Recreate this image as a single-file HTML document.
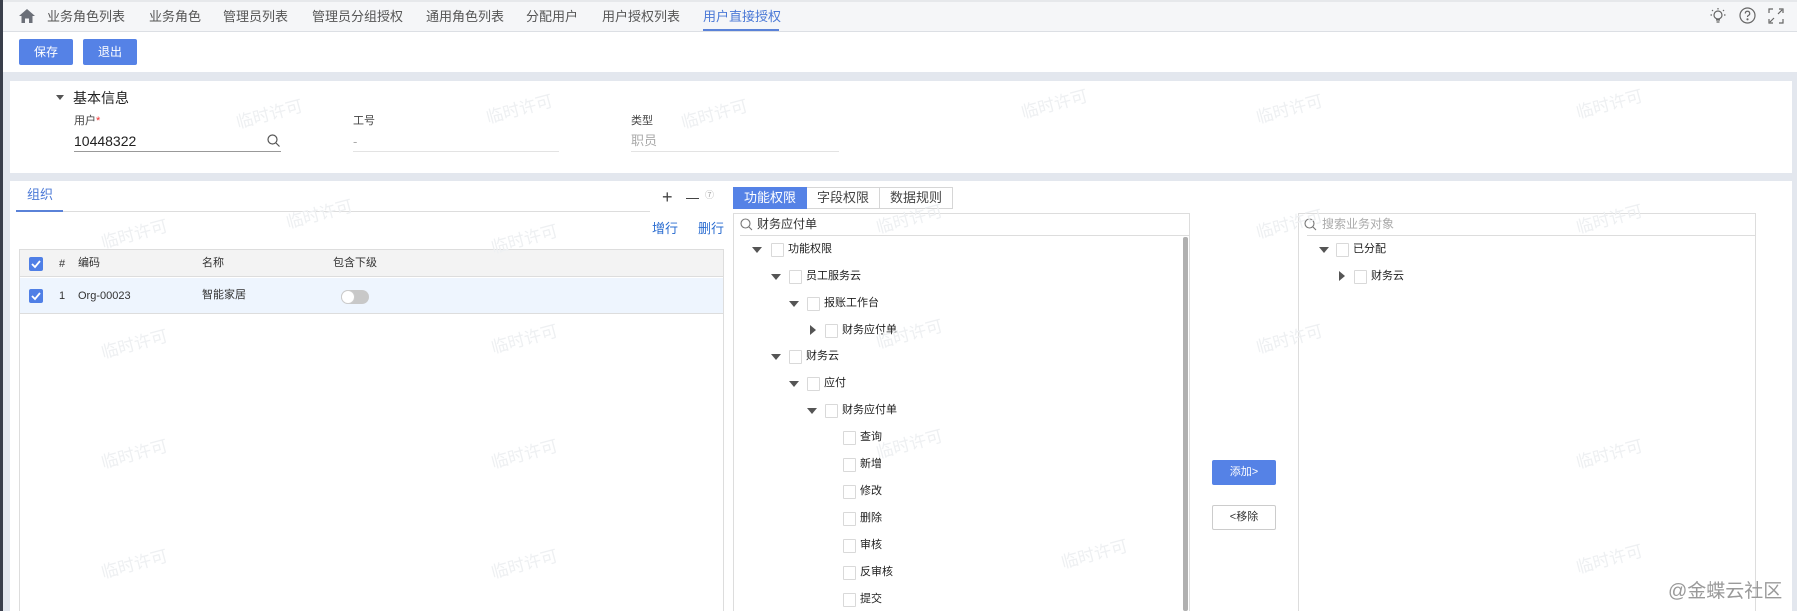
<!DOCTYPE html>
<html><head><meta charset="utf-8">
<style>
*{margin:0;padding:0;box-sizing:border-box}
body{width:1797px;height:611px;overflow:hidden;background:#e3e7ee;font-family:"Liberation Sans","Noto Sans CJK SC",sans-serif;color:#212121;position:relative}
.a{position:absolute}
.t{position:absolute;white-space:nowrap;line-height:1}
.cb{position:absolute;width:13px;height:14px;border:1px solid #d9d9d9;background:#fff;border-radius:1px}
.dn{position:absolute;width:0;height:0;border-left:5px solid transparent;border-right:5px solid transparent;border-top:6px solid #555}
.rt{position:absolute;width:0;height:0;border-top:5px solid transparent;border-bottom:5px solid transparent;border-left:6px solid #555}
.wm{position:absolute;color:#eef0f2;font-size:17px;transform:rotate(-15deg);white-space:nowrap}
.nv{position:absolute;white-space:nowrap;line-height:1;top:10px;font-size:13px;color:#555}
</style></head><body>
<div class="a" style="left:0;top:0;width:3px;height:611px;background:#3a3f4b"></div>
<div class="a" style="left:3px;top:0;width:1794px;height:32px;background:#f5f6f8;border-bottom:1px solid #dcdfe4;border-top:2px solid #e6e8eb"></div>
<svg class="a" style="left:19px;top:9px" width="16" height="14" viewBox="0 0 16 14"><path d="M8 0 L16 7 L13.5 7 L13.5 14 L10 14 L10 9.5 L6 9.5 L6 14 L2.5 14 L2.5 7 L0 7 Z" fill="#6b6f78"/></svg>
<div class="nv" style="left:47px">业务角色列表</div>
<div class="nv" style="left:149px">业务角色</div>
<div class="nv" style="left:223px">管理员列表</div>
<div class="nv" style="left:312px">管理员分组授权</div>
<div class="nv" style="left:426px">通用角色列表</div>
<div class="nv" style="left:526px">分配用户</div>
<div class="nv" style="left:602px">用户授权列表</div>
<div class="nv" style="left:703px;color:#4a78d6">用户直接授权</div>
<div class="a" style="left:703px;top:29px;width:76px;height:2px;background:#5a82d8"></div>
<svg class="a" style="left:1709px;top:7px" width="18" height="18" viewBox="0 0 18 18" fill="none" stroke="#666" stroke-width="1.2"><circle cx="9" cy="8" r="4"/><path d="M7 13h4M7.5 15h3M9 1v1.5M3 3l1 1M15 3l-1 1M1.5 8h1.5M15 8h1.5"/></svg>
<svg class="a" style="left:1739px;top:7px" width="17" height="17" viewBox="0 0 17 17" fill="none" stroke="#666" stroke-width="1.2"><circle cx="8.5" cy="8.5" r="7.5"/><path d="M6.3 6.5a2.2 2.2 0 1 1 3 2c-.6.3-.8.7-.8 1.5"/><circle cx="8.5" cy="12.3" r=".5" fill="#666"/></svg>
<svg class="a" style="left:1768px;top:8px" width="16" height="16" viewBox="0 0 16 16" fill="none" stroke="#666" stroke-width="1.2"><path d="M1 5V1h4M11 1h4v4M15 11v4h-4M5 15H1v-4M10 6l4-4M6 10l-4 4"/></svg>
<div class="a" style="left:3px;top:32px;width:1794px;height:40px;background:#fff"></div>
<div class="a" style="left:19px;top:39px;width:54px;height:26px;background:#5582e6;border-radius:2px;color:#fff;font-size:12px;text-align:center;line-height:26px">保存</div>
<div class="a" style="left:83px;top:39px;width:54px;height:26px;background:#5582e6;border-radius:2px;color:#fff;font-size:12px;text-align:center;line-height:26px">退出</div>
<div class="a" style="left:10px;top:81px;width:1782px;height:92px;background:#fff"></div>
<div class="dn" style="left:56px;top:95px;border-left-width:4px;border-right-width:4px;border-top-width:5px"></div>
<div class="t" style="left:73px;top:91px;font-size:14px">基本信息</div>
<div class="t" style="left:74px;top:116px;font-size:11px;color:#444">用户<span style="color:#e33">*</span></div>
<div class="t" style="left:74px;top:134px;font-size:14px">10448322</div>
<div class="a" style="left:74px;top:151px;width:207px;height:1px;background:#999"></div>
<svg class="a" style="left:267px;top:134px" width="13" height="13" viewBox="0 0 13 13" fill="none" stroke="#555" stroke-width="1.2"><circle cx="5.5" cy="5.5" r="4.5"/><path d="M9 9l3.5 3.5"/></svg>
<div class="t" style="left:353px;top:116px;font-size:11px;color:#444">工号</div>
<div class="t" style="left:353px;top:135px;font-size:13px;color:#aaa">-</div>
<div class="a" style="left:353px;top:151px;width:206px;height:1px;background:#e3e3e3"></div>
<div class="t" style="left:631px;top:116px;font-size:11px;color:#444">类型</div>
<div class="t" style="left:631px;top:134px;font-size:13px;color:#aaa">职员</div>
<div class="a" style="left:631px;top:151px;width:208px;height:1px;background:#e3e3e3"></div>
<div class="a" style="left:10px;top:181px;width:1782px;height:430px;background:#fff"></div>
<div class="t" style="left:27px;top:188px;font-size:13px;color:#4a78d6">组织</div>
<div class="a" style="left:16px;top:211px;width:634px;height:1px;background:#ddd"></div>
<div class="a" style="left:16px;top:210px;width:47px;height:2px;background:#5a82d8"></div>
<div class="t" style="left:662px;top:188px;font-size:18px;color:#444">+</div>
<div class="a" style="left:686px;top:198px;width:13px;height:1px;background:#444"></div>
<div class="t" style="left:705px;top:191px;font-size:9px;color:#aaa">⑦</div>
<div class="t" style="left:652px;top:222px;font-size:13px;color:#2a6cd0">增行</div>
<div class="t" style="left:698px;top:222px;font-size:13px;color:#2a6cd0">删行</div>
<div class="a" style="left:19px;top:249px;width:705px;height:362px;border:1px solid #ddd;border-bottom:none"></div>
<div class="a" style="left:20px;top:250px;width:703px;height:27px;background:#f3f3f3;border-bottom:1px solid #ddd"></div>
<div class="a" style="left:20px;top:278px;width:703px;height:36px;background:#eef5fe;border-bottom:1px solid #ddd"></div>
<div class="a" style="left:29px;top:257px;width:14px;height:14px;background:#4f7fe6;border-radius:2px"></div>
<svg class="a" style="left:29px;top:257px" width="14" height="14"><path d="M3 7l3 3 5-6" stroke="#fff" stroke-width="1.8" fill="none"/></svg>
<div class="t" style="left:59px;top:259px;font-size:11px;color:#333">#</div>
<div class="t" style="left:78px;top:258px;font-size:11px;color:#333">编码</div>
<div class="t" style="left:202px;top:258px;font-size:11px;color:#333">名称</div>
<div class="t" style="left:333px;top:258px;font-size:11px;color:#333">包含下级</div>
<div class="a" style="left:29px;top:289px;width:14px;height:14px;background:#4f7fe6;border-radius:2px"></div>
<svg class="a" style="left:29px;top:289px" width="14" height="14"><path d="M3 7l3 3 5-6" stroke="#fff" stroke-width="1.8" fill="none"/></svg>
<div class="t" style="left:59px;top:291px;font-size:11px;color:#333">1</div>
<div class="t" style="left:78px;top:291px;font-size:11px;color:#333">Org-00023</div>
<div class="t" style="left:202px;top:290px;font-size:11px;color:#333">智能家居</div>
<div class="a" style="left:341px;top:290px;width:28px;height:14px;background:#c8c8c8;border-radius:7px"></div>
<div class="a" style="left:341px;top:290px;width:14px;height:14px;background:#fff;border-radius:7px;border:1px solid #ccc"></div>
<div class="a" style="left:733px;top:187px;width:220px;height:22px;border:1px solid #d6d6d6"></div>
<div class="a" style="left:733px;top:187px;width:74px;height:22px;background:#5582e6;color:#fff;font-size:13px;text-align:center;line-height:22px">功能权限</div>
<div class="a" style="left:807px;top:188px;width:73px;height:20px;border-right:1px solid #d6d6d6;font-size:13px;color:#444;text-align:center;line-height:20px">字段权限</div>
<div class="a" style="left:880px;top:188px;width:72px;height:20px;font-size:13px;color:#444;text-align:center;line-height:20px">数据规则</div>
<div class="a" style="left:733px;top:213px;width:457px;height:398px;border:1px solid #ddd;border-bottom:none"></div>
<div class="a" style="left:740px;top:235px;width:449px;height:1px;background:#ddd"></div>
<svg class="a" style="left:740px;top:218px" width="13" height="13" viewBox="0 0 13 13" fill="none" stroke="#777" stroke-width="1.1"><circle cx="5.5" cy="5.5" r="4.5"/><path d="M9 9l3 3"/></svg>
<div class="t" style="left:757px;top:218px;font-size:12px;color:#333">财务应付单</div>
<div class="a" style="left:1183px;top:237px;width:5px;height:374px;background:#b0b0b0;border-radius:2px"></div>
<div class="dn" style="left:752px;top:247px"></div><div class="cb" style="left:771px;top:243px"></div><div class="t" style="left:788px;top:244px;font-size:11px">功能权限</div>
<div class="dn" style="left:771px;top:274px"></div><div class="cb" style="left:789px;top:270px"></div><div class="t" style="left:806px;top:271px;font-size:11px">员工服务云</div>
<div class="dn" style="left:789px;top:301px"></div><div class="cb" style="left:807px;top:297px"></div><div class="t" style="left:824px;top:298px;font-size:11px">报账工作台</div>
<div class="rt" style="left:810px;top:325px"></div><div class="cb" style="left:825px;top:324px"></div><div class="t" style="left:842px;top:325px;font-size:11px">财务应付单</div>
<div class="dn" style="left:771px;top:354px"></div><div class="cb" style="left:789px;top:350px"></div><div class="t" style="left:806px;top:351px;font-size:11px">财务云</div>
<div class="dn" style="left:789px;top:381px"></div><div class="cb" style="left:807px;top:377px"></div><div class="t" style="left:824px;top:378px;font-size:11px">应付</div>
<div class="dn" style="left:807px;top:408px"></div><div class="cb" style="left:825px;top:404px"></div><div class="t" style="left:842px;top:405px;font-size:11px">财务应付单</div>
<div class="cb" style="left:843px;top:431px"></div><div class="t" style="left:860px;top:432px;font-size:11px">查询</div>
<div class="cb" style="left:843px;top:458px"></div><div class="t" style="left:860px;top:459px;font-size:11px">新增</div>
<div class="cb" style="left:843px;top:485px"></div><div class="t" style="left:860px;top:486px;font-size:11px">修改</div>
<div class="cb" style="left:843px;top:512px"></div><div class="t" style="left:860px;top:513px;font-size:11px">删除</div>
<div class="cb" style="left:843px;top:539px"></div><div class="t" style="left:860px;top:540px;font-size:11px">审核</div>
<div class="cb" style="left:843px;top:566px"></div><div class="t" style="left:860px;top:567px;font-size:11px">反审核</div>
<div class="cb" style="left:843px;top:593px"></div><div class="t" style="left:860px;top:594px;font-size:11px">提交</div>
<div class="a" style="left:1212px;top:460px;width:64px;height:25px;background:#5582e6;border-radius:2px;color:#fff;font-size:11px;text-align:center;line-height:25px">添加&gt;</div>
<div class="a" style="left:1212px;top:505px;width:64px;height:25px;background:#fff;border:1px solid #ccc;border-radius:2px;color:#333;font-size:11px;text-align:center;line-height:23px">&lt;移除</div>
<div class="a" style="left:1298px;top:213px;width:458px;height:398px;border:1px solid #ddd;border-bottom:none"></div>
<div class="a" style="left:1307px;top:235px;width:448px;height:1px;background:#ddd"></div>
<svg class="a" style="left:1304px;top:218px" width="13" height="13" viewBox="0 0 13 13" fill="none" stroke="#777" stroke-width="1.1"><circle cx="5.5" cy="5.5" r="4.5"/><path d="M9 9l3 3"/></svg>
<div class="t" style="left:1322px;top:218px;font-size:12px;color:#aaa">搜索业务对象</div>
<div class="dn" style="left:1319px;top:247px"></div><div class="cb" style="left:1336px;top:243px"></div><div class="t" style="left:1353px;top:244px;font-size:11px">已分配</div>
<div class="rt" style="left:1339px;top:271px"></div><div class="cb" style="left:1354px;top:270px"></div><div class="t" style="left:1371px;top:271px;font-size:11px">财务云</div>
<div class="t" style="left:1668px;top:582px;font-size:19px;color:#9a9a9a">@金蝶云社区</div>
<div class="wm" style="left:235px;top:100px">临时许可</div>
<div class="wm" style="left:485px;top:95px">临时许可</div>
<div class="wm" style="left:680px;top:100px">临时许可</div>
<div class="wm" style="left:1020px;top:90px">临时许可</div>
<div class="wm" style="left:1255px;top:95px">临时许可</div>
<div class="wm" style="left:1575px;top:90px">临时许可</div>
<div class="wm" style="left:100px;top:220px">临时许可</div>
<div class="wm" style="left:285px;top:200px">临时许可</div>
<div class="wm" style="left:490px;top:225px">临时许可</div>
<div class="wm" style="left:875px;top:205px">临时许可</div>
<div class="wm" style="left:1255px;top:210px">临时许可</div>
<div class="wm" style="left:1575px;top:205px">临时许可</div>
<div class="wm" style="left:100px;top:330px">临时许可</div>
<div class="wm" style="left:490px;top:325px">临时许可</div>
<div class="wm" style="left:875px;top:320px">临时许可</div>
<div class="wm" style="left:1255px;top:325px">临时许可</div>
<div class="wm" style="left:100px;top:440px">临时许可</div>
<div class="wm" style="left:490px;top:440px">临时许可</div>
<div class="wm" style="left:875px;top:430px">临时许可</div>
<div class="wm" style="left:1575px;top:440px">临时许可</div>
<div class="wm" style="left:100px;top:550px">临时许可</div>
<div class="wm" style="left:490px;top:550px">临时许可</div>
<div class="wm" style="left:1060px;top:540px">临时许可</div>
<div class="wm" style="left:1575px;top:545px">临时许可</div>
</body></html>
